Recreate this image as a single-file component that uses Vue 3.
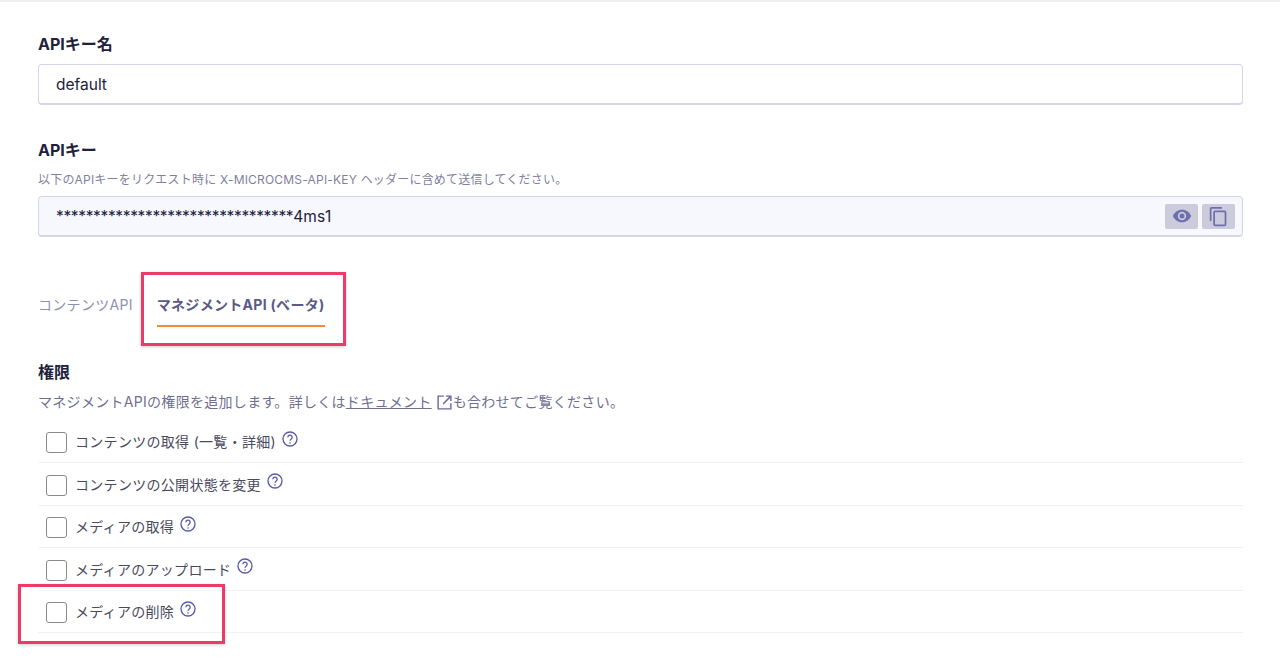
<template>
  <div class="page">
    <div class="field name-field">
      <h3 class="label">APIキー名</h3>
      <div class="input">default</div>
    </div>

    <div class="field key-field">
      <h3 class="label">APIキー</h3>
      <p class="hint">以下のAPIキーをリクエスト時に X-MICROCMS-API-KEY ヘッダーに含めて送信してください。</p>
      <div class="input readonly">
        <span><span class="stars">********************************</span>4ms1</span>
        <div class="key-actions">
          <button class="key-btn">
            <svg width="20" height="20" viewBox="0 0 24 24" fill="#6f6fae">
              <path d="M12 4.5C7 4.5 2.7 7.6 1 12c1.7 4.4 6 7.5 11 7.5s9.3-3.1 11-7.5c-1.7-4.4-6-7.5-11-7.5zM12 17a5 5 0 1 1 0-10 5 5 0 0 1 0 10zm0-8a3 3 0 1 0 0 6 3 3 0 0 0 0-6z" />
            </svg>
          </button>
          <button class="key-btn">
            <svg width="21" height="21" viewBox="0 0 24 24" fill="#6f6fae">
              <path d="M16 1H4a2 2 0 0 0-2 2v14h2V3h12V1zm3 4H8a2 2 0 0 0-2 2v14a2 2 0 0 0 2 2h11a2 2 0 0 0 2-2V7a2 2 0 0 0-2-2zm0 16H8V7h11v14z" />
            </svg>
          </button>
        </div>
      </div>
    </div>

    <div class="tabs">
      <div class="tab">コンテンツAPI</div>
      <div class="tab active">マネジメントAPI (ベータ)</div>
      <div class="mark tab-mark"></div>
    </div>

    <h3 class="label perm-title">権限</h3>
    <p class="perm-desc">
      <span>マネジメントAPIの権限を追加します。詳しくは</span>
      <a class="doc-link">ドキュメント</a>
      <svg class="ext" width="17" height="17" viewBox="0 0 24 24" fill="none" stroke="#6a6a9a" stroke-width="2">
        <path d="M11 3H3v18h18v-8" />
        <path d="M14 3h7v7M21 3L10 14" />
      </svg>
      <span>も合わせてご覧ください。</span>
    </p>

    <ul class="perm-list">
      <li v-for="perm in permissions" :key="perm" class="perm-row">
        <span class="checkbox"></span>
        <span class="perm-name">{{ perm }}</span>
        <svg class="help" width="16" height="16" viewBox="0 0 24 24" fill="none" stroke="#5a5aaa" stroke-width="2">
          <circle cx="12" cy="12" r="10.5" />
          <path d="M8.8 9.3a3.2 3.2 0 1 1 5 2.7c-1.1.8-1.8 1.4-1.8 2.8" />
          <circle cx="12" cy="18" r="1.2" fill="#5a5aaa" stroke="none" />
        </svg>
      </li>
      <div class="mark row-mark"></div>
    </ul>
  </div>
</template>

<script setup>
const permissions = [
  'コンテンツの取得 (一覧・詳細)',
  'コンテンツの公開状態を変更',
  'メディアの取得',
  'メディアのアップロード',
  'メディアの削除'
]
</script>

<style>
html,
body {
  margin: 0;
  background: #fff;
}
</style>

<style scoped>
.page {
  box-sizing: border-box;
  height: 662px;
  overflow: hidden;
  padding: 33px 37px 0 38px;
  border-top: 2px solid #eeeef3;
  font-family: Inter, "Noto Sans CJK JP", sans-serif;
  color: #21213b;
}

.label {
  margin: 0;
  font-size: 16px;
  line-height: 18px;
  font-weight: 700;
  color: #21213b;
}

.name-field .input {
  margin-top: 11px;
}

.key-field {
  margin-top: 36px;
}

.hint {
  margin: 13px 0 8px;
  font-size: 12px;
  line-height: 16px;
  letter-spacing: 0.2px;
  color: #7f7f9e;
}

.input {
  box-sizing: border-box;
  height: 41px;
  padding: 0 7px 0 17px;
  display: flex;
  align-items: center;
  justify-content: space-between;
  border: 1px solid #d5d5e8;
  border-bottom-width: 2px;
  border-radius: 4px;
  font-size: 15.5px;
  color: #21213b;
}

.readonly {
  background: #f7f8fd;
}

.stars {
  letter-spacing: -0.35px;
}

.key-actions {
  display: flex;
  gap: 4px;
}

.key-btn {
  width: 33px;
  height: 25px;
  padding: 0;
  display: flex;
  align-items: center;
  justify-content: center;
  background: #cbcbdb;
  border: none;
  border-radius: 2px;
}

.tabs {
  position: relative;
  margin-top: 35px;
  display: flex;
  gap: 24px;
}

.tab {
  height: 53px;
  line-height: 66px;
  font-size: 14px;
  letter-spacing: 0.3px;
  color: #8f8fb0;
}

.tab.active {
  font-weight: 700;
  color: #5a5a85;
  border-bottom: 2px solid #f28c3c;
}

.mark {
  position: absolute;
  box-sizing: border-box;
  border: 3px solid #ee3a68;
  box-shadow: 0 1px 3px rgba(0, 0, 0, 0.2);
}

.tab-mark {
  left: 103px;
  top: 0;
  width: 205px;
  height: 74px;
}

.perm-title {
  margin-top: 36px;
}

.perm-desc {
  margin: 11px 0 0;
  display: flex;
  align-items: center;
  font-size: 14px;
  line-height: 20px;
  letter-spacing: 0.3px;
  color: #6f6f92;
}

.doc-link {
  color: #6f6f92;
  text-decoration: underline;
}

.ext {
  margin: 0 0 0 4px;
}

.perm-list {
  position: relative;
  margin: 8.5px 0 0;
  padding: 0;
  list-style: none;
}

.perm-row {
  box-sizing: border-box;
  height: 42.5px;
  padding: 3px 0 0 8px;
  display: flex;
  align-items: center;
  border-bottom: 1px solid #f1f1f6;
}

.checkbox {
  box-sizing: border-box;
  width: 21px;
  height: 21px;
  border: 1px solid #8a8a8a;
  border-radius: 3px;
  background: #fff;
}

.perm-name {
  margin: -3px 0 0 8px;
  font-size: 14px;
  letter-spacing: 0.3px;
  color: #4a4a5e;
}

.help {
  margin: -8px 0 0 6px;
}

.row-mark {
  left: -20px;
  top: 163px;
  width: 207px;
  height: 60px;
}
</style>
